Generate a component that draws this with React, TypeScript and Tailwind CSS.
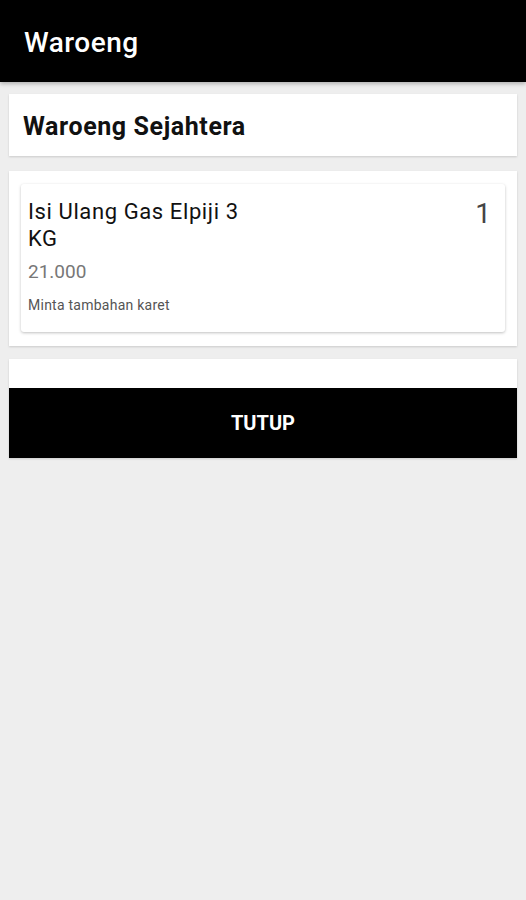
import React from "react";

const items = [
  {
    name: "Isi Ulang Gas Elpiji 3 KG",
    price: "21.000",
    note: "Minta tambahan karet",
    qty: 1,
  },
];

export default function App() {
  return (
    <div
      className="min-h-[900px] w-[526px] bg-[#eeeeee]"
      style={{ fontFamily: "Roboto, 'Noto Sans', sans-serif" }}
    >
      {/* Header */}
      <div className="flex h-[82px] items-center bg-black px-6 shadow-[0_2px_4px_rgba(0,0,0,0.25)]">
        <h1 className="pt-[4px] text-[28px] font-medium tracking-[0.5px] text-white">Waroeng</h1>
      </div>

      <div className="flex flex-col px-[9px]">
        {/* Nama toko */}
        <div className="mt-3 flex h-[62px] items-center bg-white px-[14px] shadow-[0_1px_2px_rgba(0,0,0,0.15)]">
          <h2 className="pt-[4px] text-[25px] font-bold tracking-[0.6px] text-[#111]">
            Waroeng Sejahtera
          </h2>
        </div>

        {/* Daftar pesanan */}
        <div className="mt-[15px] bg-white px-3 pt-[13px] pb-[14px] shadow-[0_1px_2px_rgba(0,0,0,0.15)]">
          {items.map((item) => (
            <div
              key={item.name}
              className="flex h-[148px] justify-between rounded-[3px] bg-white pl-[7px] pr-[14px] pt-[14px] shadow-[0_1px_3px_rgba(0,0,0,0.25)]"
            >
              <div className="flex flex-col">
                <p className="w-[240px] text-[22px] leading-[27px] tracking-[0.6px] text-[#111]">
                  {item.name}
                </p>
                <p className="mt-[9px] text-[19px] leading-[22px] text-[#777]">
                  {item.price}
                </p>
                <p className="mt-[13px] text-[14px] leading-[18px] tracking-[0.25px] text-[#555]">
                  {item.note}
                </p>
              </div>
              <span className="text-[28px] leading-[32px] text-[#444]">{item.qty}</span>
            </div>
          ))}
        </div>

        {/* Tombol tutup */}
        <div className="mt-[13px] bg-white pt-[29px] shadow-[0_1px_2px_rgba(0,0,0,0.15)]">
          <button className="flex h-[70px] w-full items-center justify-center bg-black text-[20px] font-bold text-white">
            TUTUP
          </button>
        </div>
      </div>
    </div>
  );
}
